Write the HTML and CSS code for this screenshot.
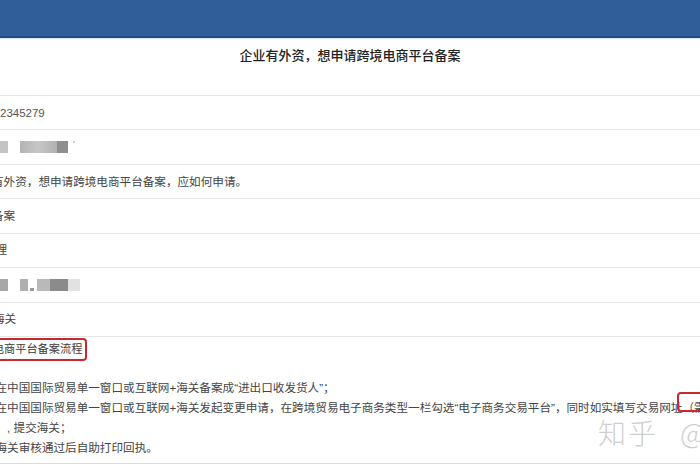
FILE: index.html
```html
<!DOCTYPE html>
<html lang="zh-CN">
<head>
<meta charset="utf-8">
<title>企业有外资，想申请跨境电商平台备案</title>
<link rel="stylesheet" href="styles.css">
</head>
<body>
<div class="page">
  <header class="topbar"></header>
  <h1 class="title">企业有外资，想申请跨境电商平台备案</h1>
  <div class="table">
    <div class="row"><span class="val in-num">2345279</span></div>
    <div class="row">
      <span class="blur">
        <i class="b b1"></i><i class="b b2"></i><i class="b b3"></i><i class="tick">'</i>
      </span>
    </div>
    <div class="row"><span class="val">有外资，想申请跨境电商平台备案，应如何申请。</span></div>
    <div class="row"><span class="val">备案</span></div>
    <div class="row"><span class="val in-5">理</span></div>
    <div class="row">
      <span class="blur">
        <i class="b c1"></i><i class="b c2"></i><i class="dot"></i><i class="b c3"></i><i class="b c4"></i><i class="b c5"></i>
      </span>
    </div>
    <div class="row"><span class="val in-7">海关</span></div>
    <div class="section">
      <div class="heading"><span class="boxed">电商平台备案流程</span></div>
      <div class="steps">
        <p class="line">在中国国际贸易单一窗口或互联网+海关备案成“进出口收发货人”；</p>
        <p class="line">在中国国际贸易单一窗口或互联网+海关发起变更申请，在跨境贸易电子商务类型一栏勾选“电子商务交易平台”，同时如实填写交易网址（需耳</p>
        <p class="line">）, 提交海关；</p>
        <p class="line">海关审核通过后自助打印回执。</p>
      </div>
      <span class="mark-box"></span>
      <span class="watermark">知乎<span class="at">@</span></span>
    </div>
  </div>
</div>
</body>
</html>
```
FILE: styles.css
```css
html, body {
  margin: 0;
  padding: 0;
  background: #ffffff;
}
body {
  width: 700px;
  height: 470px;
  overflow: hidden;
  font-family: "Liberation Sans", "Noto Sans CJK SC", sans-serif;
  color: #444444;
}
.page {
  width: 700px;
}
.topbar {
  height: 36px;
  background: #305e99;
  border-bottom: 2px solid #244c80;
  box-shadow: 0 1px 0 #d6e2ef;
}
.title {
  margin: 0;
  height: 58px;
  padding-top: 7px;
  box-sizing: border-box;
  text-align: center;
  font-size: 13px;
  line-height: 20px;
  font-weight: 500;
  color: #222222;
  font-family: "Noto Sans CJK SC", sans-serif;
  border-bottom: 1px solid #e6e6e6;
}
.table {
  margin-left: -8px;
  width: 708px;
}
.row {
  height: 34.43px;
  box-sizing: border-box;
  border-bottom: 1px solid #e6e6e6;
  display: flex;
  align-items: center;
  font-size: 11.6px;
  white-space: nowrap;
}
.val {
  line-height: 16px;
}
.in-num {
  padding-left: 8px;
  font-size: 11.5px;
  color: #555;
}
.in-5 {
  margin-left: 3.4px;
}
.in-7 {
  margin-left: 1px;
}
.blur {
  display: flex;
  align-items: flex-start;
  height: 12px;
  padding-left: 8px;
}
.b {
  display: block;
  height: 12px;
}
.b1 { width: 8px; background: #c4c4c4; margin-right: 12px; }
.b2 { width: 37px; background: linear-gradient(90deg, #b4b4b4, #c6c6c6 50%, #b0b0b0); }
.b3 { width: 11px; background: #8e8e8e; margin-right: 5px; }
.tick {
  font-style: normal;
  font-size: 9px;
  line-height: 6px;
  color: #777;
}
.c1 { width: 8px; background: #a8a8a8; margin-right: 12px; }
.c2 { width: 8px; background: #b0b0b0; margin-right: 2px; }
.dot { display: block; width: 4px; height: 3px; margin-top: 9px; background: #999; margin-right: 3px; }
.c3 { width: 13px; background: #b9b9b9; }
.c4 { width: 18px; background: #8b8b8b; }
.c5 { width: 12px; background: #e2e2e2; }
.section {
  position: relative;
  height: 127px;
  box-sizing: border-box;
  border-bottom: 1px solid #dcdcdc;
  padding-top: 1.5px;
  font-size: 11.6px;
}
.heading {
  height: 23px;
}
.boxed {
  display: inline-block;
  height: 23px;
  box-sizing: border-box;
  line-height: 19px;
  font-size: 11.2px;
  padding: 0 3px 0 4px;
  margin-left: -5.2px;
  border: 2px solid #c8292e;
  border-radius: 4px;
  color: #3a3a3a;
  white-space: nowrap;
}
.steps {
  margin-top: 17px;
  margin-left: 3.5px;
}
.line {
  margin: 0;
  line-height: 20px;
  white-space: nowrap;
  color: #444;
}
.mark-box {
  position: absolute;
  left: 685px;
  top: 55px;
  width: 40px;
  height: 20px;
  box-sizing: border-box;
  border: 2px solid #c8292e;
  border-radius: 4px;
}
.watermark {
  position: absolute;
  left: 606px;
  top: 78px;
  font-family: "Noto Sans CJK SC", sans-serif;
  font-size: 28px;
  font-weight: 300;
  line-height: 34px;
  color: rgba(190, 190, 190, 0.75);
  white-space: nowrap;
  letter-spacing: 2px;
}
.at {
  margin-left: 22px;
}
```
